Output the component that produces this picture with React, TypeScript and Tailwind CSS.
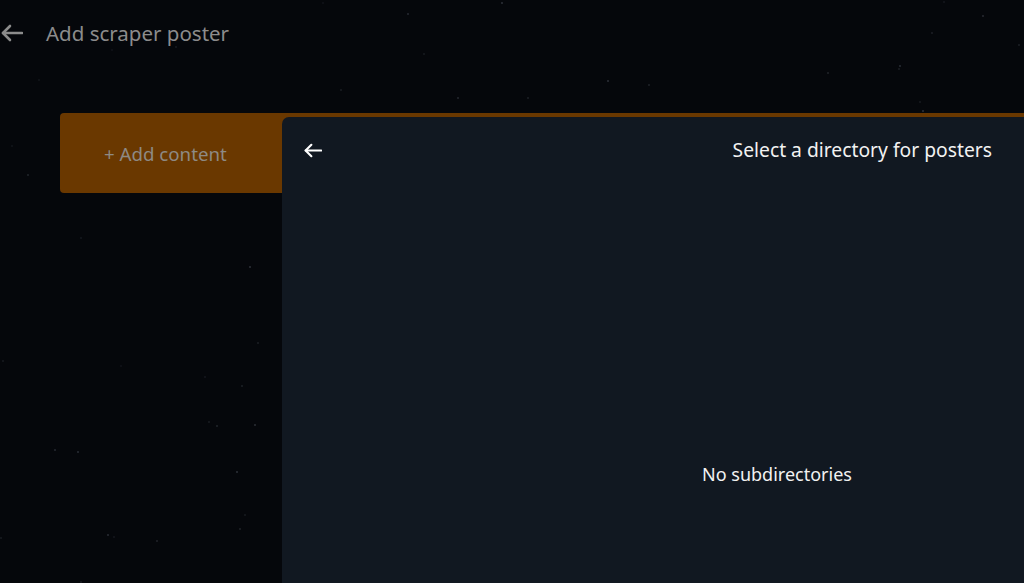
import React from 'react';

// deterministic star field for the backdrop
function makeStars(count: number) {
  let seed = 7;
  const rand = () => {
    seed = (seed * 16807) % 2147483647;
    return seed / 2147483647;
  };
  return Array.from({ length: count }, () => ({
    x: Math.round(rand() * 1024),
    y: Math.round(rand() * 583),
    o: 0.08 + rand() * 0.2,
  }));
}

const stars = makeStars(110);

function BackArrow({ className, width = 2.4 }: { className?: string; width?: number }) {
  return (
    <svg viewBox="0 0 22 18" className={className} fill="none" stroke="currentColor" strokeWidth={width} strokeLinecap="round" strokeLinejoin="round">
      <path d="M21 9H2" />
      <path d="M9 2L2 9l7 7" />
    </svg>
  );
}

export default function App() {
  return (
    <div
      className="relative w-[1024px] h-[583px] overflow-hidden bg-[#05070b]"
      style={{ fontFamily: '"Noto Sans", "Open Sans", sans-serif' }}
    >
      {/* Stars */}
      <div className="absolute inset-0 pointer-events-none">
        {stars.map((s, i) => (
          <span
            key={i}
            className="absolute w-[2px] h-[2px] rounded-full bg-[#9aa3b5]"
            style={{ left: s.x, top: s.y, opacity: s.o }}
          />
        ))}
      </div>

      {/* Page header */}
      <div className="relative flex items-center h-[66px]">
        <BackArrow className="w-[22px] h-[18px] text-[#8c8c8c] ml-[1px]" width={2.6} />
        <span className="ml-[23px] text-[20.5px] text-[#8c8c8c] leading-none">Add scraper poster</span>
      </div>

      {/* Content list */}
      <div className="relative pl-[60px] pt-[47px]">
        <div className="h-[80px] bg-[#6a3800] rounded-l-[4px] flex items-center pl-[44px] pt-[2px]">
          <span className="text-[18.7px] text-[#8e8a84]">+ Add content</span>
        </div>
      </div>

      {/* Directory picker drawer */}
      <div className="absolute left-[282px] top-[117px] w-[990px] bottom-0 bg-[#111821] rounded-tl-[7px]">
        <div className="w-[742px] flex items-center justify-between pl-[22px] pr-[32px] pt-[22px]">
          <BackArrow className="w-[18px] h-[15px] text-white" width={2.6} />
          <span className="text-[19.3px] text-[#f2f2f2] leading-[22px]">Select a directory for posters</span>
        </div>
        <div className="pt-[300px] text-center">
          <span className="text-[18px] text-[#f2f2f2]">No subdirectories</span>
        </div>
      </div>
    </div>
  );
}
